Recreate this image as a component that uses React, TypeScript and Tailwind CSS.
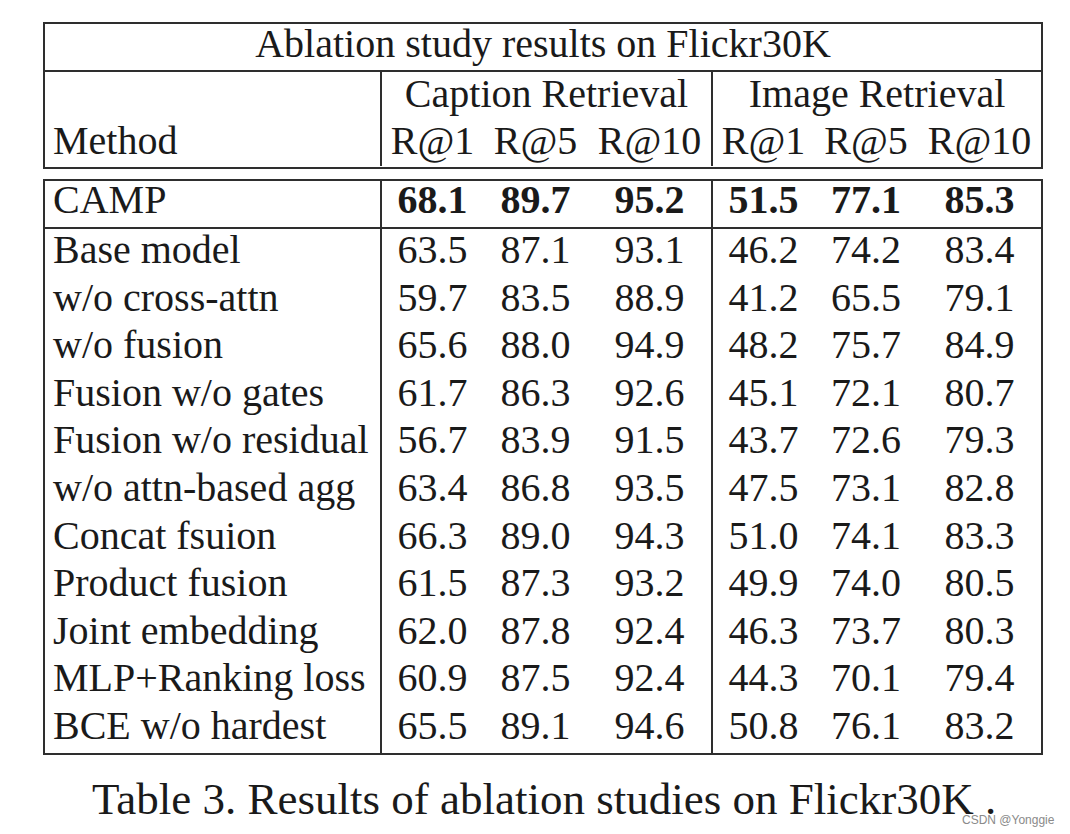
const rows: [string, string[]][] = [
  ['Base model', ['63.5', '87.1', '93.1', '46.2', '74.2', '83.4']],
  ['w/o cross-attn', ['59.7', '83.5', '88.9', '41.2', '65.5', '79.1']],
  ['w/o fusion', ['65.6', '88.0', '94.9', '48.2', '75.7', '84.9']],
  ['Fusion w/o gates', ['61.7', '86.3', '92.6', '45.1', '72.1', '80.7']],
  ['Fusion w/o residual', ['56.7', '83.9', '91.5', '43.7', '72.6', '79.3']],
  ['w/o attn-based agg', ['63.4', '86.8', '93.5', '47.5', '73.1', '82.8']],
  ['Concat fsuion', ['66.3', '89.0', '94.3', '51.0', '74.1', '83.3']],
  ['Product fusion', ['61.5', '87.3', '93.2', '49.9', '74.0', '80.5']],
  ['Joint embedding', ['62.0', '87.8', '92.4', '46.3', '73.7', '80.3']],
  ['MLP+Ranking loss', ['60.9', '87.5', '92.4', '44.3', '70.1', '79.4']],
  ['BCE w/o hardest', ['65.5', '89.1', '94.6', '50.8', '76.1', '83.2']],
];

const grid = 'grid grid-cols-[335px_103px_105px_123px_103px_104px_123px]';

const Cells = ({ values, bold }: { values: string[]; bold?: boolean }) => (
  <>
    {values.map((v, i) => (
      <div
        key={i}
        className={
          'text-center ' +
          (bold ? 'font-bold ' : '') +
          (i === 0 || i === 3 ? 'border-l-2 border-[#2e2e2e]' : '')
        }
      >
        {v}
      </div>
    ))}
  </>
);

const App = () => {
  return (
    <div className="relative min-h-[834px] w-[1070px] bg-white text-[#1a1a1a] font-['Liberation_Serif','Times_New_Roman',serif]">
      <div className="pl-[43px] pt-[22px] text-[40px] w-[1043px]">
        {/* header block */}
        <div className="border-2 border-[#2e2e2e]">
          <div className="h-[48px] leading-[39px] text-center border-b-2 border-[#2e2e2e]">
            Ablation study results on Flickr30K
          </div>
          <div className={grid + ' pb-[1px]'}>
            <div className="row-span-2 flex items-end pl-[8px] leading-[51px]">Method</div>
            <div className="col-span-3 text-center leading-[43px] border-l-2 border-[#2e2e2e]">
              Caption Retrieval
            </div>
            <div className="col-span-3 text-center leading-[43px] border-l-2 border-[#2e2e2e]">
              Image Retrieval
            </div>
            <div className="contents leading-[51px]">
              <Cells values={['R@1', 'R@5', 'R@10', 'R@1', 'R@5', 'R@10']} />
            </div>
          </div>
        </div>

        {/* body block */}
        <div className="mt-[10px] border-2 border-[#2e2e2e]">
          <div className={grid + ' h-[48px] leading-[37px] border-b-2 border-[#2e2e2e]'}>
            <div className="pl-[8px]">CAMP</div>
            <Cells values={['68.1', '89.7', '95.2', '51.5', '77.1', '85.3']} bold />
          </div>
          {rows.map(([name, vals]) => (
            <div key={name} className={grid + ' h-[47.6px] leading-[41px]'}>
              <div className="pl-[8px] whitespace-nowrap">{name}</div>
              <Cells values={vals} />
            </div>
          ))}
        </div>
      </div>

      <div className="mt-[19px] pl-[92px] text-[45px] leading-[50px] whitespace-nowrap">
        Table 3. Results of ablation studies on Flickr30K .
      </div>

      <div className="absolute left-[962px] top-[811px] text-[12px] text-[#8a8a8a] font-['Liberation_Sans',Arial,sans-serif]">
        CSDN @Yonggie
      </div>
    </div>
  );
};

export default App;
